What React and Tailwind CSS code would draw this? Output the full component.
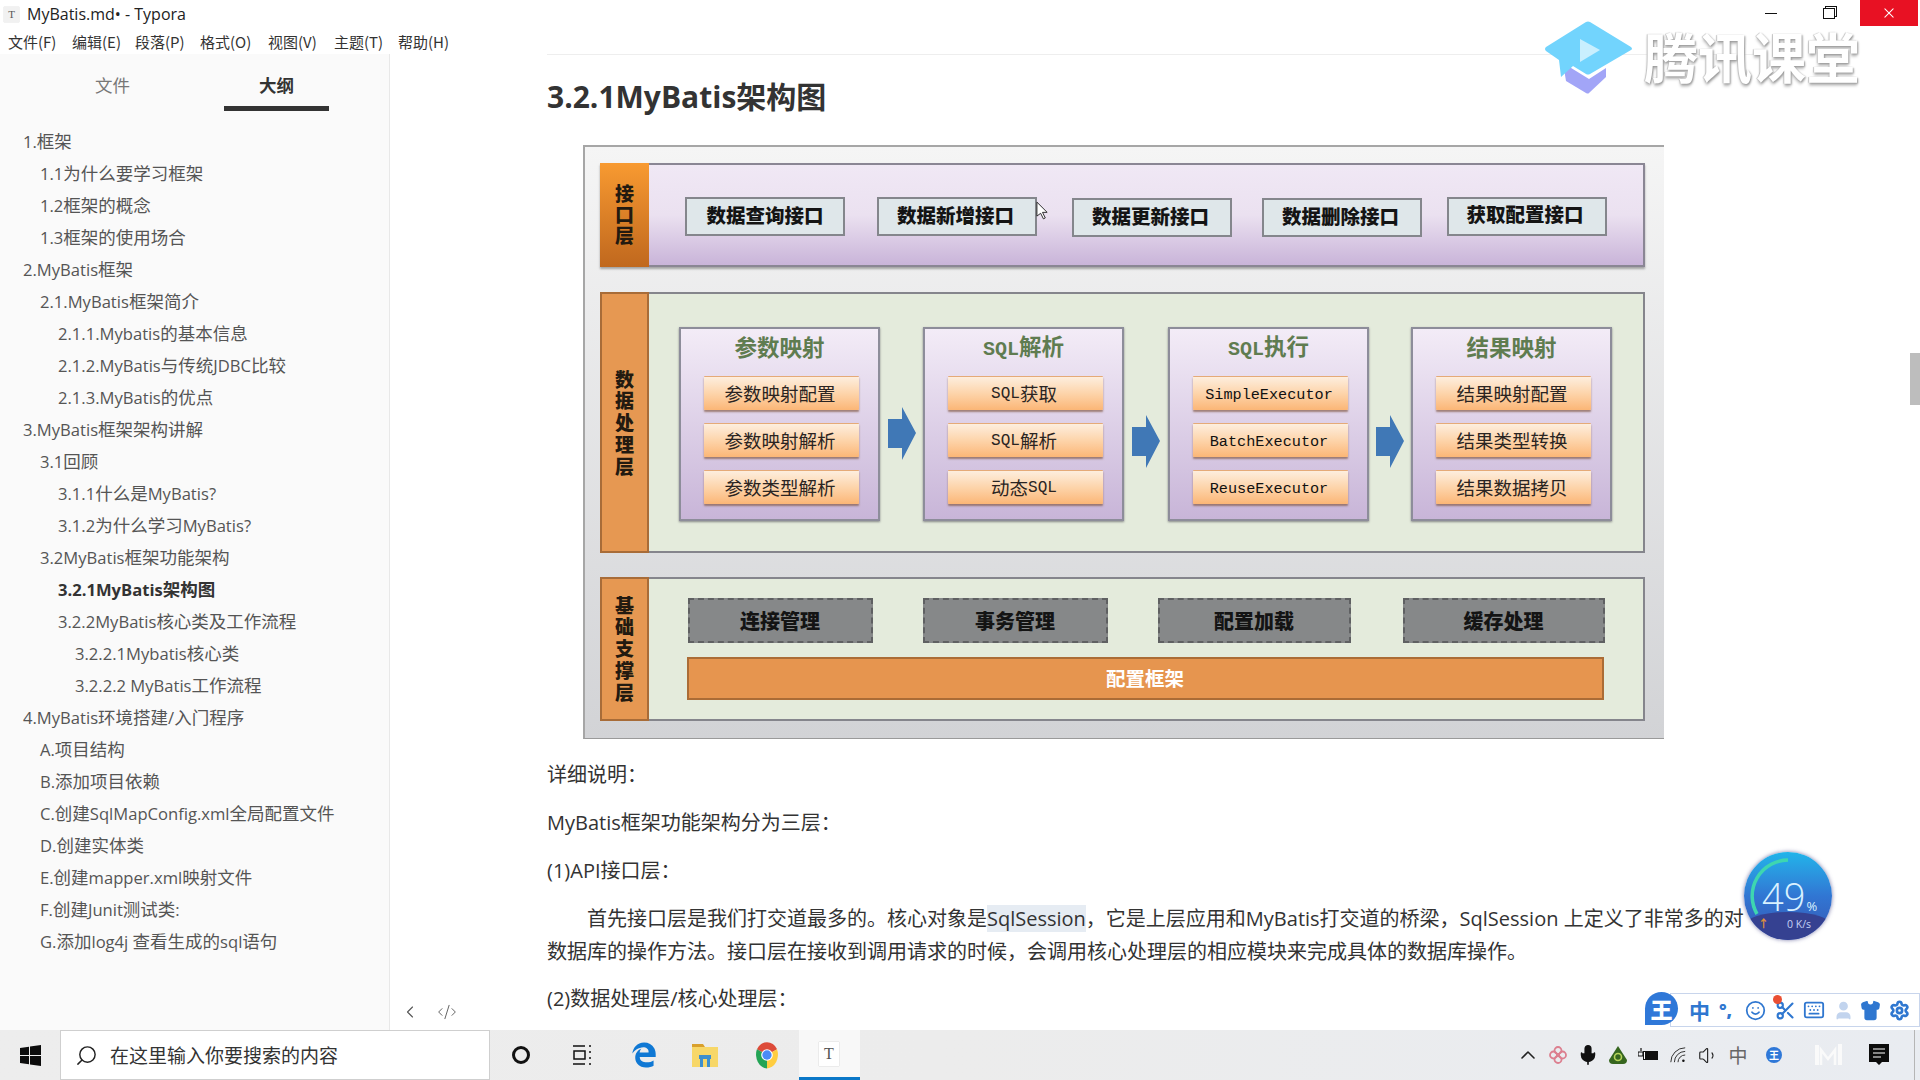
import React from "react";
import { FaEdgeLegacy } from "react-icons/fa6";
import { Search, ChevronUp, Mic, ChevronLeft, Code2, Smile, Scissors, Keyboard, User, Shirt, Settings, Volume1, Plus } from "lucide-react";

const CJK = "font-['Open_Sans','Noto_Sans_CJK_SC',sans-serif]";
const CN = "font-['Noto_Sans_CJK_SC','Liberation_Sans',sans-serif]";

const outline = [
  [0, "1.框架"], [1, "1.1为什么要学习框架"], [1, "1.2框架的概念"], [1, "1.3框架的使用场合"],
  [0, "2.MyBatis框架"], [1, "2.1.MyBatis框架简介"], [2, "2.1.1.Mybatis的基本信息"], [2, "2.1.2.MyBatis与传统JDBC比较"], [2, "2.1.3.MyBatis的优点"],
  [0, "3.MyBatis框架架构讲解"], [1, "3.1回顾"], [2, "3.1.1什么是MyBatis?"], [2, "3.1.2为什么学习MyBatis?"], [1, "3.2MyBatis框架功能架构"],
  [2, "3.2.1MyBatis架构图", true], [2, "3.2.2MyBatis核心类及工作流程"], [3, "3.2.2.1Mybatis核心类"], [3, "3.2.2.2 MyBatis工作流程"],
  [0, "4.MyBatis环境搭建/入门程序"], [1, "A.项目结构"], [1, "B.添加项目依赖"], [1, "C.创建SqlMapConfig.xml全局配置文件"], [1, "D.创建实体类"],
  [1, "E.创建mapper.xml映射文件"], [1, "F.创建Junit测试类:"], [1, "G.添加log4j 查看生成的sql语句"],
];
const indent = ["pl-[23px]", "pl-[40px]", "pl-[58px]", "pl-[75px]"];
const menus = [["文件(F)", "w-[64px]"], ["编辑(E)", "w-[63px]"], ["段落(P)", "w-[65px]"], ["格式(O)", "w-[68px]"], ["视图(V)", "w-[66px]"], ["主题(T)", "w-[64px]"], ["帮助(H)", "w-[60px]"]];

function OutlineText({ t }) {
  return t.split(/([\x00-\x7F]+)/).map((part, i) =>
    i % 2 ? <span key={i} className="text-[16.6px]">{part}</span> : part
  );
}

function Vert({ chars, pitch }) {
  return <div className={`[writing-mode:vertical-rl] text-[19px] leading-none font-black text-[#231a10] ${pitch}`}>{chars}</div>;
}

function Btn({ t, cls }) {
  return (
    <div className={`w-[160px] h-[39px] shrink-0 border-2 border-[#84868c] bg-[#dfe7ea] flex items-center justify-center text-[19.5px] font-black text-[#141414] ${cls}`}>{t}</div>
  );
}

function Item({ children, mono }) {
  return (
    <div className={`h-[34px] rounded-[1px] bg-gradient-to-b from-[#fdeede] via-[#fdd4aa] to-[#fbb676] border-t border-[#e5aa78] shadow-[0_2px_2px_rgba(130,90,70,0.7)] flex items-center justify-center pr-[3px] text-[#2a2422] ${mono ? "pt-[3px] text-[15.2px] font-['Liberation_Mono',monospace] text-[#111]" : "pt-[1px] text-[18.5px]"}`}>
      {children}
    </div>
  );
}

function Sql({ children }) {
  return <span className="font-['Liberation_Mono',monospace] text-[16px]">{children}</span>;
}

function Box({ title, items }) {
  return (
    <div className="w-[201px] h-[194px] shrink-0 border-2 border-[#8d8d9a] bg-gradient-to-b from-[#f3ecf7] to-[#c8b5d8] shadow-[0_1px_2px_rgba(70,70,80,0.6)] pl-[23px] pr-[19px] flex flex-col">
      <div className="h-[36px] mb-[11px] pr-[4px] flex items-center justify-center text-[22.5px] font-semibold text-[#5f7c50]">{title}</div>
      <div className="flex flex-col gap-[13px]">{items}</div>
    </div>
  );
}

function Arrow({ cls }) {
  return (
    <svg viewBox="0 0 28 53" className={`w-[28px] h-[53px] shrink-0 ${cls}`}>
      <polygon points="0,12 14,12 14,0 28,26 14,53 14,41 0,41" fill="#4078b6" />
    </svg>
  );
}

function Gray({ t, cls }) {
  return (
    <div className={`h-[45px] shrink-0 border-2 border-dashed border-[#5f6062] bg-[#868889] flex items-center justify-center pr-[1px] text-[20px] font-black text-[#141414] ${cls}`}>{t}</div>
  );
}

function Diagram() {
  return (
    <div className={`ml-[36px] w-[1081px] h-[594px] shrink-0 border-t-2 border-l-2 border-[#a6a6a6] border-b border-b-[#9a9a9a] bg-gradient-to-b from-[#f5f5f5] to-[#d2d3d6] pl-[15px] pt-[16px] flex flex-col gap-[24px] ${CN}`}>
      <div className="flex w-[1045px] h-[104px] shadow-[0_2px_2px_rgba(90,90,90,0.5)]">
        <div className="w-[49px] bg-gradient-to-b from-[#f89a31] to-[#c0681e] flex items-center justify-center">
          <Vert chars="接口层" pitch="tracking-[2px]" />
        </div>
        <div className="flex-1 border-2 border-l-0 border-[#8a8694] bg-gradient-to-b from-[#f0e8f5] via-[#ebe1f0] to-[#c9b4d9] pt-[32px] flex items-start">
          <Btn t="数据查询接口" cls="ml-[36px] pb-[3px]" />
          <Btn t="数据新增接口" cls="ml-[32px] pb-[3px] pr-[3px]" />
          <Btn t="数据更新接口" cls="ml-[35px] mt-[1px] pb-[3px] pr-[3px]" />
          <Btn t="数据删除接口" cls="ml-[30px] mt-[1px] pb-[3px] pr-[3px]" />
          <Btn t="获取配置接口" cls="ml-[25px] pb-[5px] pr-[4px]" />
        </div>
      </div>
      <div className="flex w-[1045px] h-[261px] mt-[1px]">
        <div className="w-[49px] bg-[#e69852] border-2 border-[#a86c38] flex items-center justify-center pt-[4px]">
          <Vert chars="数据处理层" pitch="tracking-[2.7px]" />
        </div>
        <div className="flex-1 border-2 border-l-0 border-[#85858c] bg-[#e4ebdc] pt-[33px] pl-[30px] flex items-start">
          <Box title="参数映射" items={[<Item key="a">参数映射配置</Item>, <Item key="b">参数映射解析</Item>, <Item key="c">参数类型解析</Item>]} />
          <Arrow cls="ml-[8px] mt-[80px]" />
          <div className="ml-[7px]">
            <Box title={<span><span className="font-['Liberation_Mono',monospace] text-[20px]">SQL</span>解析</span>} items={[<Item key="a"><Sql>SQL</Sql>获取</Item>, <Item key="b"><Sql>SQL</Sql>解析</Item>, <Item key="c">动态<Sql>SQL</Sql></Item>]} />
          </div>
          <Arrow cls="ml-[8px] mt-[88px]" />
          <div className="ml-[8px]">
            <Box title={<span><span className="font-['Liberation_Mono',monospace] text-[20px]">SQL</span>执行</span>} items={[<Item key="a" mono>SimpleExecutor</Item>, <Item key="b" mono>BatchExecutor</Item>, <Item key="c" mono>ReuseExecutor</Item>]} />
          </div>
          <Arrow cls="ml-[7px] mt-[88px]" />
          <div className="ml-[7px]">
            <Box title="结果映射" items={[<Item key="a">结果映射配置</Item>, <Item key="b">结果类型转换</Item>, <Item key="c">结果数据拷贝</Item>]} />
          </div>
        </div>
      </div>
      <div className="flex w-[1045px] h-[144px]">
        <div className="w-[49px] bg-[#e69852] border-2 border-[#a86c38] flex items-center justify-center pt-[2px]">
          <Vert chars="基础支撑层" pitch="tracking-[2.7px]" />
        </div>
        <div className="flex-1 border-2 border-l-0 border-[#85858c] bg-[#e4ebdc] pt-[19px] pl-[38px] flex flex-col">
          <div className="flex items-start">
            <Gray t="连接管理" cls="w-[185px] ml-[1px]" />
            <Gray t="事务管理" cls="w-[185px] ml-[50px]" />
            <Gray t="配置加载" cls="w-[193px] ml-[50px]" />
            <Gray t="缓存处理" cls="w-[202px] ml-[52px]" />
          </div>
          <div className="mt-[14px] w-[917px] h-[43px] border-2 border-[#ab6c36] bg-[#e6954f] flex items-center justify-center pb-[1px] pr-[1px] text-[19.5px] font-bold text-white">配置框架</div>
        </div>
      </div>
    </div>
  );
}

function TyporaIcon({ small }) {
  return (
    <div className={`flex items-center justify-center bg-[#f1f1f1] text-[#555] font-['Liberation_Serif',serif] shadow-[0_0_1px_rgba(0,0,0,0.3)] ${small ? "w-[15px] h-[15px] text-[11px]" : "w-[20px] h-[24px] bg-white text-[16px]"}`}>T</div>
  );
}

function Chrome() {
  return (
    <svg viewBox="0 0 48 48" className="w-[28px] h-[28px]">
      <path d="M24 24 L6.7 14 A20 24 0 0 1 41.3 14 Z" fill="#dd4b39" />
      <path d="M24 24 L41.3 14 A20 24 0 0 1 24 47 Z" fill="#ffcd40" />
      <path d="M24 24 L24 47 A20 24 0 0 1 6.7 14 Z" fill="#23a455" />
      <circle cx="24" cy="24" r="10" fill="#fff" />
      <circle cx="24" cy="24" r="8" fill="#4a8bf5" />
    </svg>
  );
}

function Taskbar() {
  const cell = "w-[61.5px] h-full flex items-center justify-center shrink-0";
  const tray = "w-[30px] h-full flex items-center justify-center shrink-0";
  return (
    <div className="h-[50px] shrink-0 flex items-center bg-gradient-to-r from-[#ededed] via-[#ececec] to-[#e9ecf1]">
      <div className="w-[60px] h-full flex items-center justify-center shrink-0">
        <svg viewBox="0 0 21 21" className="w-[21px] h-[21px]"><path d="M0 3l9-1.3V10H0zM10 1.5L21 0v10H10zM0 11h9v8.3L0 18zM10 11h11v10l-11-1.5z" fill="#0c0c0c" /></svg>
      </div>
      <div className="w-[430px] h-full bg-white border border-[#cfcfcf] flex items-center shrink-0">
        <Search size={23} strokeWidth={1.5} className="ml-[14px] -scale-x-100 text-[#222]" />
        <span className={`ml-[12px] text-[19px] text-[#333] ${CN}`}>在这里输入你要搜索的内容</span>
      </div>
      <div className={cell}><div className="w-[18px] h-[18px] rounded-full border-[3px] border-[#111]" /></div>
      <div className={cell}>
        <svg viewBox="0 0 22 22" className="w-[22px] h-[22px]" fill="none" stroke="#111" strokeWidth="1.5"><path d="M2 2h12M2 20h12M3 7h11v8H3zM18 2h2M18 8h2M18 14h2M18 20h2" /></svg>
      </div>
      <div className={cell}><FaEdgeLegacy className="w-[26px] h-[26px] text-[#0f78d4]" /></div>
      <div className={cell}>
        <svg viewBox="0 0 28 28" className="w-[28px] h-[28px]">
          <path d="M1 3h11l2 3H1z" fill="#d9a02c" /><rect x="1" y="6" width="26" height="20" fill="#f7d768" /><rect x="8" y="14" width="12" height="4" fill="#3d8fce" /><rect x="9" y="18" width="3" height="8" fill="#3d8fce" /><rect x="16" y="18" width="3" height="8" fill="#3d8fce" />
        </svg>
      </div>
      <div className={cell}><Chrome /></div>
      <div className="ml-[1px] w-[61px] h-full flex items-center justify-center shrink-0 bg-[#f8f8f8] border-b-[3px] border-[#0b78c8]"><TyporaIcon /></div>
      <div className="ml-auto flex items-center h-full">
        <div className={tray}><ChevronUp size={24} strokeWidth={1.6} className="text-[#222]" /></div>
        <div className={tray}>
          <svg viewBox="0 0 20 20" className="w-[20px] h-[20px]" fill="none" stroke="#dc7f8f" strokeWidth="1.8"><circle cx="10" cy="5.5" r="3.5" /><circle cx="5.5" cy="10" r="3.5" /><circle cx="14.5" cy="10" r="3.5" /><circle cx="10" cy="14.5" r="3.5" /></svg>
        </div>
        <div className={tray}><Mic size={22} fill="#111" strokeWidth={1.8} className="text-[#111]" /></div>
        <div className={tray}>
          <svg viewBox="0 0 20 20" className="w-[20px] h-[20px]"><path d="M10 1 L19 15 Q19 19 15 19 H5 Q1 19 1 15 Z" fill="#36661f" /><circle cx="10" cy="12" r="3.5" fill="none" stroke="#b6d45a" strokeWidth="1.6" /></svg>
        </div>
        <div className={tray}>
          <svg viewBox="0 0 20 14" className="w-[20px] h-[14px]"><path d="M3 0v3M0 4h5v4H0z" fill="none" stroke="#111" strokeWidth="1.2" /><rect x="5" y="3" width="15" height="9" fill="#111" /><rect x="6" y="4" width="1" height="7" fill="#fff" /></svg>
        </div>
        <div className={tray}>
          <svg viewBox="0 0 20 20" className="w-[18px] h-[18px]" fill="none" stroke="#333" strokeWidth="1.1"><path d="M2 18A16 16 0 0 1 18 2M6 18A12 12 0 0 1 18 6M10 18A8 8 0 0 1 18 10" /><circle cx="16" cy="16.5" r="1.4" fill="#111" stroke="none" /></svg>
        </div>
        <div className={tray}><Volume1 size={21} strokeWidth={1.3} className="text-[#222]" /></div>
        <div className={`${tray} text-[19px] text-[#666] ${CN}`}>中</div>
        <div className="ml-[13px] w-[16px] h-[16px] rounded-full bg-[#2f78d8] text-white text-[10px] font-bold flex items-center justify-center shrink-0">王</div>
        <div className="ml-[33px] w-[28px] h-[22px] shrink-0">
          <svg viewBox="0 0 28 22" className="w-full h-full" fill="#fafafa"><rect x="0" y="1" width="4" height="20" /><path d="M6 21V6l7 9 7-9v15" fill="none" stroke="#fafafa" strokeWidth="2.5" /><rect x="23" y="0" width="4" height="21" /></svg>
        </div>
        <div className="ml-[26px] shrink-0">
          <svg viewBox="0 0 20 22" className="w-[20px] h-[22px]"><path d="M0 0h20v18h-7l-3 3-3-3H0z" fill="#0c0c0c" /><path d="M4 5h12M4 9h12M4 13h8" stroke="#fff" strokeWidth="1.2" /></svg>
        </div>
        <div className="ml-[25px] w-[6px] h-full border-l border-[#b5b5b5] shrink-0" />
      </div>
    </div>
  );
}

export default function App() {
  return (
    <div className={`relative w-[1920px] h-[1080px] overflow-hidden flex flex-col bg-white text-[#333] ${CJK}`}>
      <div className="h-[29px] shrink-0 flex items-center">
        <div className="ml-[4px] w-[16px]"><TyporaIcon small /></div>
        <span className="ml-[7px] pb-[2px] text-[16px] text-[#222] font-['Open_Sans',sans-serif]">MyBatis.md• - Typora</span>
        <div className="ml-auto flex items-start h-full">
          <div className="w-[12px] h-[1px] bg-[#111] mt-[13px]" />
          <div className="ml-[46px] mt-[8px] w-[12px] h-[11px] border border-[#111] shadow-[2px_-2px_0_-1px_#fff,2px_-2px_0_0_#111]" />
          <div className="ml-[25px] w-[58px] h-[26px] bg-[#e81123] flex items-center justify-center">
            <Plus size={20} strokeWidth={1.2} className="rotate-45 text-white" />
          </div>
          <div className="w-[2px]" />
        </div>
      </div>
      <div className="h-[25px] shrink-0 flex items-center pl-[8px] pt-[1px]">
        {menus.map(([t, w]) => <span key={t} className={`${w} text-[15px] text-[#333] ${CN}`}>{t}</span>)}
      </div>
      <div className="flex-1 min-h-0 flex">
        <aside className={`w-[390px] shrink-0 bg-[#fafafa] border-r border-[#e8e8e8] ${CJK}`}>
          <div className={`h-[71px] flex items-start pl-[60px] pt-[5px] ${CN}`}>
            <div className="w-[105px] h-[52px] flex items-center justify-center text-[17.5px] text-[#777]">文件</div>
            <div className="ml-[59px] w-[105px] h-[52px] pt-[5px] flex items-center justify-center text-[17.5px] font-bold text-[#333] border-b-[5px] border-[#333]">大纲</div>
          </div>
          {outline.map(([lvl, t, active]) => (
            <div key={t} className={`h-[32px] flex items-center text-[17.5px] whitespace-nowrap ${indent[lvl]} ${active ? "font-bold text-[#333]" : "text-[#555]"}`}>
              <span><OutlineText t={t} /></span>
            </div>
          ))}
        </aside>
        <main className="flex-1 min-w-0 overflow-hidden pl-[157px]">
          <div className="w-[1215px] border-t border-[#eeeeee]">
            <h2 className="mt-[21px] h-[41px] leading-[41px] text-[30px] font-bold text-[#333]">3.2.1MyBatis架构图</h2>
            <div className="mt-[28px]"><Diagram /></div>
            <p className="mt-[20px] h-[32px] leading-[32px] text-[20px]">详细说明：</p>
            <p className="mt-[16px] h-[32px] leading-[32px] text-[20px]">MyBatis框架功能架构分为三层：</p>
            <p className="mt-[16px] h-[32px] leading-[32px] text-[20px]">(1)API接口层：</p>
            <p className="mt-[15px] w-[1200px] leading-[33px] text-[20px] indent-[40px]">
              首先接口层是我们打交道最多的。核心对象是<span className="bg-[#e6ecf3]">SqlSession</span>，它是上层应用和MyBatis打交道的桥梁，SqlSession 上定义了非常多的对数据库的操作方法。接口层在接收到调用请求的时候，会调用核心处理层的相应模块来完成具体的数据库操作。
            </p>
            <p className="mt-[15px] h-[32px] leading-[32px] text-[20px]">(2)数据处理层/核心处理层：</p>
          </div>
        </main>
      </div>
      <Taskbar />

      <div className="absolute left-[1910px] top-[353px] w-[10px] h-[52px] bg-[#bdbdbd]" />
      <div className="absolute left-[400px] top-[1002px] flex items-center gap-[17px] text-[#555]">
        <ChevronLeft size={20} strokeWidth={1.3} />
        <Code2 size={20} strokeWidth={1.1} />
      </div>
      <svg viewBox="0 0 14 20" className="absolute left-[1036px] top-[201px] w-[13px] h-[19px]"><path d="M1 1v15l4-3 3 6 2-1-3-6h5z" fill="#fff" stroke="#222" strokeWidth="1" /></svg>

      <svg viewBox="0 0 90 76" className="absolute left-[1544px] top-[21px] w-[90px] h-[76px]">
        <path d="M19 42 L45 58 L62 47 L62 56 L45 72 Q44 73 42 72 L22 60 Z" fill="#a2a5f7" />
        <path d="M42 1 Q44 0 46 1 L87 26 Q89 28 87 29 L46 53 Q44 54 42 53 L29 45 L17 56 L15 39 L2 30 Q0 28 2 26 Z" fill="#72d4fd" />
        <polygon points="36,18 56,29 36,41" fill="#c9effe" />
      </svg>
      <div className={`absolute left-[1644px] top-[20px] leading-[72px] text-[54px] font-bold text-white whitespace-nowrap [text-shadow:1px_1px_2px_#9a9a9a,-1px_0_1px_#c4c4c4,0_3px_3px_#c4c4c4] ${CN}`}>腾讯课堂</div>

      <div className="absolute left-[1744px] top-[852px] w-[88px] h-[88px] rounded-full overflow-hidden bg-gradient-to-b from-[#20b4ea] via-[#3176d3] to-[#3556b2] shadow-[0_0_4px_rgba(60,60,130,0.7)]">
        <svg viewBox="0 0 88 88" className="absolute inset-0 w-full h-full"><path d="M13 62 A36 36 0 0 1 44 8" fill="none" stroke="#3ed6b0" strokeWidth="3.5" /></svg>
        <div className="absolute left-0 right-0 bottom-0 h-[28px] rounded-t-[50%] bg-[#354191]" />
        <div className="absolute left-[18px] top-[22px] flex items-baseline text-[#d8f1ff] font-['Open_Sans',sans-serif]">
          <span className="text-[38px] leading-[44px] font-light">49</span>
          <span className="ml-[1px] text-[13px]">%</span>
        </div>
        <span className="absolute left-[43px] top-[65px] text-[10.5px] text-[#c5d3f5] font-['Open_Sans',sans-serif]">0 K/s</span>
        <span className="absolute left-[14px] top-[64px] text-[11px] font-bold text-[#e0913a]">↑</span>
      </div>

      <div className="absolute left-[1670px] top-[993px] w-[250px] h-[34px] bg-white border border-[#c8d5ec] flex items-center text-[#2f77d0]">
        <span className={`ml-[18px] w-[24px] text-[21px] font-bold leading-none ${CN}`}>中</span>
        <span className="ml-[6px] w-[24px] text-[18px] font-black leading-none">°,</span>
        <Smile size={21} strokeWidth={2} className="ml-[2px]" />
        <Scissors size={21} strokeWidth={2.4} className="ml-[9px]" />
        <Keyboard size={22} strokeWidth={2} className="ml-[7px]" />
        <User size={21} strokeWidth={2} fill="#c2d4ee" className="ml-[8px] text-[#c2d4ee]" />
        <Shirt size={21} strokeWidth={2} fill="#2f77d0" className="ml-[6px]" />
        <Settings size={21} strokeWidth={3} className="ml-[8px]" />
      </div>
      <div className="absolute left-[1773px] top-[995px] w-[9px] h-[9px] rounded-full bg-[#ea4f33]" />
      <div className={`absolute left-[1645px] top-[992px] w-[33px] h-[33px] rounded-full rounded-bl-[8px] bg-[#2f78d8] text-white text-[22px] font-black flex items-center justify-center ${CN}`}>王</div>
    </div>
  );
}
